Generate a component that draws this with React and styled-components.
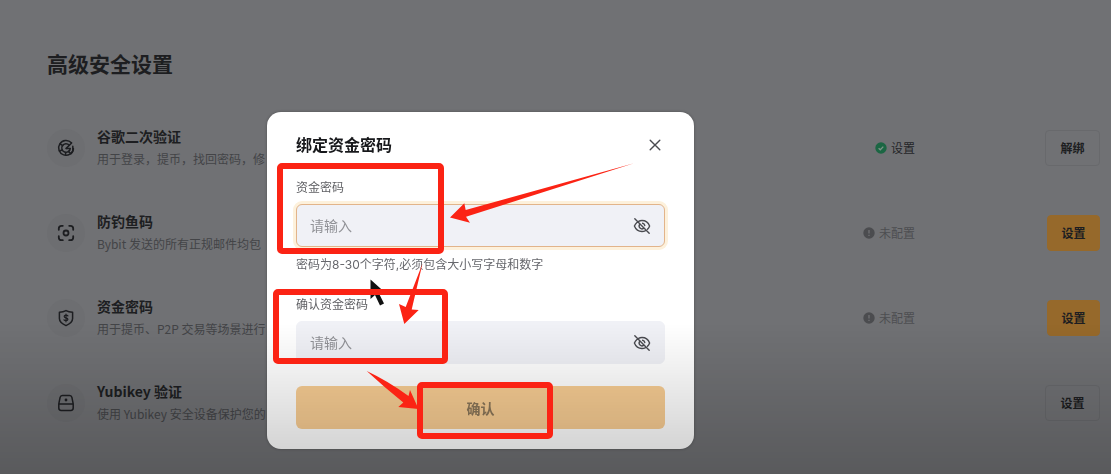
import React, { useState } from 'react';
import styled, { createGlobalStyle, css } from 'styled-components';

const GlobalStyle = createGlobalStyle`
  * {
    box-sizing: border-box;
  }
  body {
    margin: 0;
    background: #707174;
    color: #1d1e21;
    font-family: 'Noto Sans CJK SC', sans-serif;
    overflow: hidden;
  }
  button, input {
    font-family: inherit;
  }
`;

// --- Icons ---

const IconBase = ({ size = 18, children }) => (
  <svg width={size} height={size} viewBox="0 0 18 18" fill="none" stroke="currentColor" strokeWidth="1.5" strokeLinecap="round" strokeLinejoin="round" aria-hidden="true">
    {children}
  </svg>
);

const GoogleIcon = () => (
  <IconBase>
    <path d="M14.4 3.8A7.4 7.4 0 1 0 16.4 9.6" />
    <path d="M12.2 6.1A4.3 4.3 0 1 0 13.3 9.4H9.2" />
    <path d="M9.2 9.4 14.6 4M3.2 5l2.6 1.6M2.4 12l2.8-1M8.4 16l.4-2.6M15.8 7.2v4.4M11.4 12.4l2.4 2.4c1.4-1 2.3-2.6 2.6-4.4" />
  </IconBase>
);

const ScanIcon = () => (
  <IconBase>
    <path strokeWidth="1.8" d="M1.8 5.8V4.6a2.8 2.8 0 0 1 2.8-2.8h1.2M12.2 1.8h1.2a2.8 2.8 0 0 1 2.8 2.8v1.2M16.2 12.2v1.2a2.8 2.8 0 0 1-2.8 2.8h-1.2M5.8 16.2H4.6a2.8 2.8 0 0 1-2.8-2.8v-1.2" />
    <circle cx="9" cy="9" r="2.5" strokeWidth="1.8" />
  </IconBase>
);

const ShieldIcon = () => (
  <IconBase>
    <path d="M9 1.6c2 1.2 4.2 1.6 6.6 1.6v6.4c0 3.2-2.8 5.4-6.6 7-3.8-1.6-6.6-3.8-6.6-7V3.2C4.8 3.2 7 2.8 9 1.6z" />
    <path strokeWidth="1.2" d="M10.9 6.9C10.5 6.3 9.9 6.1 9 6.1c-1.1 0-1.8.5-1.8 1.3 0 1.9 3.7.9 3.7 2.9 0 .9-.8 1.4-1.9 1.4-.9 0-1.6-.3-2-.9M9 5v7.8" />
  </IconBase>
);

const KeyIcon = () => (
  <IconBase>
    <path d="M5.400 1.500h7.200a2.400 2.400 0 0 1 2.300 1.900l1.300 6.400v4.300a2.400 2.400 0 0 1-2.400 2.400H4.200a2.400 2.400 0 0 1-2.400-2.400V9.800l1.300-6.400A2.400 2.400 0 0 1 5.400 1.500zM2 10h14" />
    <circle cx="9" cy="6" r="1.4" fill="currentColor" stroke="none" />
  </IconBase>
);

const EyeOffIcon = () => (
  <IconBase>
    <path strokeWidth="1.4" d="M5.6 4.4C6.6 3.8 7.8 3.5 9 3.5c3.4 0 6.3 2.2 7.6 5.5-.5 1.3-1.2 2.4-2.1 3.3M12.2 13.8c-1 .5-2 .7-3.2.7-3.4 0-6.3-2.2-7.6-5.5.6-1.4 1.4-2.6 2.5-3.5M1.8 1.8l14.4 14.4" />
    <path strokeWidth="1.4" d="M6.6 7.4a2.9 2.9 0 0 0 4 4" />
    <path strokeWidth="1.4" d="M9.6 6.3a2.8 2.8 0 0 1 2.2 2.2" />
  </IconBase>
);

const CloseIcon = () => (
  <svg width="12" height="12" viewBox="0 0 12 12" stroke="currentColor" strokeWidth="1.4" strokeLinecap="round" aria-hidden="true">
    <path d="M1.2 1.2l9.6 9.6M10.8 1.2l-9.6 9.6" />
  </svg>
);

const CheckDot = () => (
  <svg width="12" height="12" viewBox="0 0 12 12" aria-hidden="true">
    <circle cx="6" cy="6" r="5.7" fill="#1b6643" />
    <path d="M3.6 6.2l1.7 1.6 3-3.2" fill="none" stroke="#7c9488" strokeWidth="1.3" />
  </svg>
);

const AlertDot = () => (
  <svg width="12" height="12" viewBox="0 0 12 12" aria-hidden="true">
    <circle cx="6" cy="6" r="5.7" fill="#4b4c4f" />
    <path d="M6 3v3.6M6 7.8v1.2" fill="none" stroke="#707174" strokeWidth="1.3" />
  </svg>
);

// --- Page ---

const Page = styled.main`
  min-height: 100vh;
  padding: 48px 11px 0 47px;
`;

const PageTitle = styled.h1`
  margin: 0 0 27px;
  font-size: 21px;
  line-height: 30px;
  font-weight: 700;
`;

const List = styled.ul`
  list-style: none;
  margin: 0;
  padding: 0;
`;

const Row = styled.li`
  display: flex;
  align-items: center;
  height: 85px;
`;

const IconCircle = styled.span`
  display: flex;
  align-items: center;
  justify-content: center;
  width: 38px;
  height: 38px;
  margin-right: 12px;
  border-radius: 50%;
  background: #6d6e71;
`;

const Info = styled.div`
  flex: 1;
  min-width: 0;
  padding-bottom: 2px;
`;

const InfoTitle = styled.h2`
  margin: 0 0 2px;
  font-size: 14px;
  line-height: 22px;
  font-weight: 700;
`;

const InfoText = styled.p`
  margin: 0;
  font-size: 12px;
  line-height: 20px;
  color: #434447;
`;

const Status = styled.span`
  display: flex;
  align-items: center;
  gap: 4px;
  margin-right: 130px;
  font-size: 12px;
  line-height: 18px;
  color: ${props => (props.$done ? '#242528' : '#4d4e51')};
`;

const RowButton = styled.button`
  width: 55px;
  height: 36px;
  padding: 0;
  border: 1px solid #68696c;
  border-radius: 4px;
  background: transparent;
  color: #1d1e21;
  font-size: 12px;
  font-weight: 700;
  cursor: pointer;

  ${props => props.$primary && css`
    width: 53px;
    margin-left: 2px;
    border-color: #96692b;
    background: #96692b;
  `}
`;

// --- Dialog ---

const DialogLayer = styled.div`
  position: fixed;
  inset: 0;
  display: flex;
  justify-content: center;
  align-items: flex-start;
  padding: 112px 150px 0 0;
`;

const Dialog = styled.section`
  position: relative;
  width: 427px;
  padding: 20px 29px 20px 29px;
  border-radius: 14px;
  background: #fff;
  box-shadow: 0 0 3px rgba(0, 0, 0, 0.3);
  font-family: Inter, 'Noto Sans CJK SC', sans-serif;
`;

const DialogHeader = styled.header`
  display: flex;
  align-items: center;
  justify-content: space-between;
  margin-bottom: 21px;
`;

const DialogTitle = styled.h2`
  margin: 0;
  font-size: 16px;
  line-height: 26px;
  font-weight: 700;
  color: #17181b;
`;

const PlainButton = styled.button`
  display: flex;
  padding: 4px;
  border: none;
  background: transparent;
  color: #4a4b50;
  cursor: pointer;
`;

const Field = styled.div`
  margin-bottom: 22px;
`;

const Label = styled.label`
  display: block;
  margin-bottom: 7px;
  font-size: 12px;
  line-height: 18px;
  color: #5f6064;
`;

const InputBox = styled.div`
  display: flex;
  align-items: center;
  height: 43px;
  padding: 0 9px 0 13px;
  border: 1px solid ${props => (props.$active ? '#e2b48a' : '#f0f1f6')};
  border-radius: 6px;
  background: #f0f1f6;
  box-shadow: ${props => (props.$active ? '0 0 0 3px #fdf1dc' : 'none')};
`;

const Input = styled.input`
  flex: 1;
  min-width: 0;
  padding: 0;
  border: none;
  outline: none;
  background: transparent;
  font-size: 14px;
  line-height: 20px;
  color: #17181b;

  &::placeholder {
    color: #909196;
    opacity: 1;
  }
`;

const Hint = styled.p`
  margin: 9px 0 0;
  font-size: 12px;
  line-height: 18px;
  color: #66676c;
`;

const SubmitButton = styled.button`
  display: block;
  width: 100%;
  height: 43px;
  border: none;
  border-radius: 6px;
  background: #f8cd93;
  color: #8a7659;
  font-size: 14px;
  font-weight: 700;
  cursor: pointer;
`;

const BottomShade = styled.div`
  position: fixed;
  left: 0;
  right: 0;
  bottom: 0;
  height: 150px;
  background: linear-gradient(rgba(0, 0, 0, 0), rgba(0, 0, 0, 0.2));
  pointer-events: none;
`;

const MarkLayer = styled(DialogLayer)`
  pointer-events: none;
`;

const rows = [
  { icon: GoogleIcon, title: '谷歌二次验证', text: '用于登录，提币，找回密码，修', status: '设置', done: true, action: '解绑' },
  { icon: ScanIcon, title: '防钓鱼码', text: 'Bybit 发送的所有正规邮件均包', status: '未配置', action: '设置', primary: true },
  { icon: ShieldIcon, title: '资金密码', text: '用于提币、P2P 交易等场景进行', status: '未配置', action: '设置', primary: true },
  { icon: KeyIcon, title: 'Yubikey 验证', text: '使用 Yubikey 安全设备保护您的', action: '设置' },
];

const PasswordField = ({ id, label, hint, active }) => {
  const [visible, setVisible] = useState(false);

  return (
    <Field>
      <Label htmlFor={id}>{label}</Label>
      <InputBox $active={active}>
        <Input id={id} type={visible ? 'text' : 'password'} placeholder="请输入" />
        <PlainButton type="button" aria-label="显示密码" onClick={() => setVisible(!visible)}>
          <EyeOffIcon />
        </PlainButton>
      </InputBox>
      {hint && <Hint>{hint}</Hint>}
    </Field>
  );
};

// Red boxes, arrows and the mouse pointer, in dialog coordinates
const Marks = () => (
  <svg width="427" height="338" viewBox="267 112 427 338" overflow="visible" aria-hidden="true">
    <path d="M370.5 279.5V299l4.5-4 5 10.500 4-2-5-10 6-1z" fill="#111" />
    <g fill="none" stroke="#fb2314" strokeWidth="6">
      <rect x="280" y="166" width="161" height="85" rx="2" />
      <rect x="276" y="292" width="169" height="69" rx="2" />
      <rect x="420" y="385" width="130" height="51" rx="2" />
    </g>
    <g fill="#fb2314">
      <path d="M450 217.5L464.3 203.3 465.7 210 634 163.3 466 216.7 470 222.7z" />
      <path d="M404.3 324L399 304 405.7 307 422.5 263.5 411.7 309.5 418.7 310z" />
      <path d="M418.5 409L410 390 408.5 396Q388 381 366.7 371 384 387 403.3 402.5L398.3 407z" />
    </g>
  </svg>
);

const App = () => (
  <>
    <GlobalStyle />
    <Page>
      <PageTitle>高级安全设置</PageTitle>
      <List>
        {rows.map(({ icon: Icon, title, text, status, done, action, primary }) => (
          <Row key={title}>
            <IconCircle><Icon /></IconCircle>
            <Info>
              <InfoTitle>{title}</InfoTitle>
              <InfoText>{text}</InfoText>
            </Info>
            {status && (
              <Status $done={done}>
                {done ? <CheckDot /> : <AlertDot />}
                {status}
              </Status>
            )}
            <RowButton type="button" $primary={primary}>{action}</RowButton>
          </Row>
        ))}
      </List>
    </Page>

    <DialogLayer>
      <Dialog role="dialog" aria-labelledby="dialog-title">
        <DialogHeader>
          <DialogTitle id="dialog-title">绑定资金密码</DialogTitle>
          <PlainButton type="button" aria-label="关闭"><CloseIcon /></PlainButton>
        </DialogHeader>
        <PasswordField id="password" label="资金密码" hint="密码为8-30个字符,必须包含大小写字母和数字" active />
        <PasswordField id="confirm" label="确认资金密码" />
        <SubmitButton type="button">确认</SubmitButton>
      </Dialog>
    </DialogLayer>
    <BottomShade />
    <MarkLayer><Marks /></MarkLayer>
  </>
);

export default App;
